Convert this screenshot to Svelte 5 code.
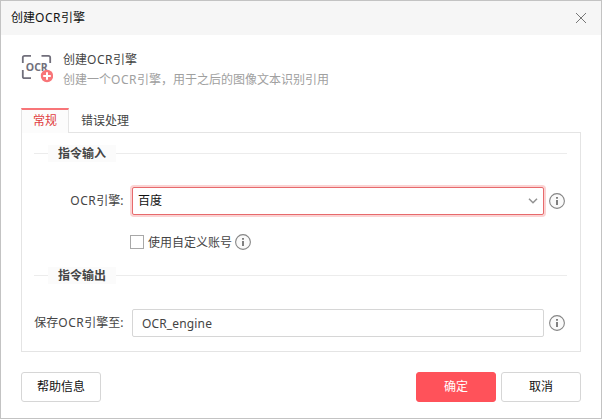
<script>
  let engine = $state('百度');
  let output = $state('OCR_engine');
  let custom = $state(false);
  let tab = $state(0);
</script>

{#snippet info()}
  <svg class="info" width="16" height="16" viewBox="0 0 16 16">
    <circle cx="8" cy="8" r="7.4" fill="#fafafa" stroke="#858585" stroke-width="1.1" />
    <path d="M7 4h2v1.7H7zM7 7h2v5H7z" fill="#808080" />
  </svg>
{/snippet}

<div class="dialog">
  <header class="titlebar">
    <span>创建<i>OCR</i>引擎</span>
    <svg class="close" width="12" height="12" viewBox="0 0 12 12">
      <path d="M1 1l10 10M11 1L1 11" stroke="#777" stroke-width="1" fill="none" />
    </svg>
  </header>

  <section class="intro">
    <svg width="32" height="30" viewBox="0 0 32 30">
      <path d="M10 1.8H3.6Q1.8 1.8 1.8 3.6V9M20.5 1.8h6.9q1.8 0 1.8 1.8V9M1.8 16v6.4q0 1.8 1.8 1.8H10" fill="none" stroke="#716f7b" stroke-width="1.8" />
      <text x="4.8" y="17" textLength="22" lengthAdjust="spacingAndGlyphs">OCR</text>
      <circle cx="26" cy="22" r="6.2" fill="#f87578" />
      <path d="M22.2 22h7.6M26 18.2v7.6" stroke="#fff" stroke-width="2" />
    </svg>
    <div class="introtext">
      <div class="name">创建<i>OCR</i>引擎</div>
      <div class="desc">创建一个<i>OCR</i>引擎，用于之后的图像文本识别引用</div>
    </div>
  </section>

  <nav class="tabs">
    <button class="tab" class:active={tab === 0} onclick={() => (tab = 0)}>常规</button>
    <button class="tab" class:active={tab === 1} onclick={() => (tab = 1)}>错误处理</button>
  </nav>

  <main class="panel">
    <div class="group"><span>指令输入</span></div>
    <div class="row first">
      <div class="label"><i>OCR</i>引擎<i>:</i></div>
      <div class="field select">
        <span>{engine}</span>
        <svg width="10" height="8" viewBox="0 0 10 8">
          <path d="M1 1.8l4 4 4-4" fill="none" stroke="#929292" stroke-width="1.5" />
        </svg>
      </div>
      {@render info()}
    </div>
    <label class="check">
      <input type="checkbox" bind:checked={custom} />
      <span>使用自定义账号</span>
      {@render info()}
    </label>
    <div class="group second"><span>指令输出</span></div>
    <div class="row last">
      <div class="label">保存<i>OCR</i>引擎至<i>:</i></div>
      <input class="field text" bind:value={output} />
      {@render info()}
    </div>
  </main>

  <footer>
    <button class="btn">帮助信息</button>
    <button class="btn primary">确定</button>
    <button class="btn">取消</button>
  </footer>
</div>

<style>
  * { box-sizing: border-box; }
  .dialog {
    width: 602px;
    height: 419px;
    display: flex;
    flex-direction: column;
    background: #fff;
    border: 1px solid #c3c3c3;
    font: 12px/18px "Noto Sans", "Noto Sans CJK SC", sans-serif;
    color: #444;
  }
  i { font-style: normal; letter-spacing: 0.5px; }
  svg { display: block; flex: none; }
  button { font: inherit; margin: 0; }
  .titlebar {
    height: 34px;
    flex: none;
    display: flex;
    align-items: center;
    justify-content: space-between;
    padding: 0 14px 0 10px;
    background: #f6f6f6;
    color: #111;
  }
  .intro {
    display: flex;
    height: 73px;
    flex: none;
    padding: 19px 0 0 20px;
  }
  .intro text { font: 700 11.4px "Open Sans", "Noto Sans", sans-serif; fill: #716f7b; }
  .introtext { margin: -4px 0 0 10px; }
  .name { line-height: 20px; }
  .desc { line-height: 20px; color: #a0a0a0; }
  .tabs { display: flex; height: 25px; flex: none; margin: 0 20px; position: relative; }
  .tab {
    height: 25px;
    border: 0;
    border-top: 2px solid transparent;
    background: none;
    color: #444;
    padding: 0 11px 1px 12px;
  }
  .tab.active {
    border-top-color: #f87578;
    border-left: 1px solid #e4e4e4;
    border-right: 1px solid #e4e4e4;
    background: #fcfcfc;
    color: #e03c40;
    padding: 0 11px 1px;
  }
  .panel {
    height: 220px;
    flex: none;
    margin: -1px 20px 0;
    border: 1px solid #e4e4e4;
    padding: 11px 13px 0 12px;
  }
  .group { display: flex; align-items: center; height: 18px; font-weight: 700; }
  .group::before { content: ""; width: 14px; height: 1px; background: #ececec; }
  .group::after { content: ""; flex: 1; height: 1px; background: #ececec; }
  .group span { width: 68px; height: 17px; line-height: 17px; padding-left: 10px; background: #fbfbfb; }
  .row { display: flex; align-items: center; height: 28px; }
  .first { margin-top: 25px; }
  .label { width: 90px; margin-right: 8px; text-align: right; white-space: nowrap; }
  .field {
    width: 412px;
    height: 28px;
    border: 1px solid #d6d6d6;
    border-radius: 2px;
    margin-right: 5px;
    background: #fff;
  }
  .select {
    display: flex;
    align-items: center;
    justify-content: space-between;
    padding: 0 5px;
    border-color: #e76a6c;
    box-shadow: 0 0 0 2px #fbd3d3;
    color: #111;
  }
  .text { font: 12px "Noto Sans", sans-serif; letter-spacing: 0.15px; color: #444; padding: 1px 9px 0; outline: 0; }
  .check { display: flex; align-items: center; height: 18px; margin: 18px 0 0 96px; }
  .check input {
    appearance: none;
    width: 14px;
    height: 14px;
    margin: 0 4px 0 0;
    border: 1px solid #a8a8a8;
    background: #fff;
  }
  .check input:checked { background: #f87578; }
  .check span { margin-right: 3px; padding-top: 1px; }
  .second { margin-top: 15px; }
  .last { margin-top: 25px; }
  footer { display: flex; margin: 20px 20px 0; gap: 5px; }
  .btn {
    width: 80px;
    height: 30px;
    padding: 0;
    border: 1px solid #d6d6d6;
    border-radius: 3px;
    background: #fff;
    color: #111;
  }
  .primary { margin-left: auto; border-color: #ff525a; background: #ff525a; color: #fff; }
</style>
